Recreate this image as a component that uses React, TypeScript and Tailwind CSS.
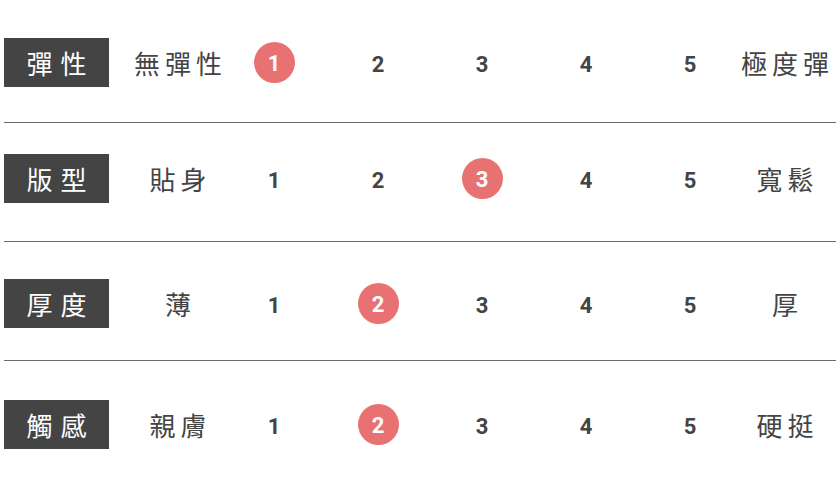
import React from "react";

const rows = [
  { label: "彈性", low: "無彈性", high: "極度彈", value: 1, pad: "pt-[38px] pb-[35px] border-b" },
  { label: "版型", low: "貼身", high: "寬鬆", value: 3, pad: "pt-[31px] pb-[38px] border-b" },
  { label: "厚度", low: "薄", high: "厚", value: 2, pad: "pt-[37px] pb-[32px] border-b" },
  { label: "觸感", low: "親膚", high: "硬挺", value: 2, pad: "pt-[39px] pb-[40px]" },
];

const cjk = "font-['Noto_Sans_CJK_TC','Noto_Sans_CJK_SC',sans-serif]";

const App = () => {
  return (
    <div className="w-[840px] h-[489px] bg-white overflow-hidden">
      <div className="mx-[4px]">
        {rows.map((row) => (
          <div key={row.label} className={`flex items-center border-[#6b6b6b] ${row.pad}`}>
            <div
              className={`w-[105px] h-[49px] bg-[#444444] text-white text-[26px] tracking-[8px] pl-[8px] flex items-center justify-center ${cjk}`}
            >
              {row.label}
            </div>
            <div className="ml-[25px] w-[88px] flex justify-center">
              <span
                className={`text-[#444444] text-[26px] tracking-[5px] pl-[5px] whitespace-nowrap ${cjk}`}
              >
                {row.low}
              </span>
            </div>
            {[1, 2, 3, 4, 5].map((n) => (
              <div key={n} className="w-[104px] flex items-center justify-center">
                {n === row.value ? (
                  <span className="w-[41px] h-[41px] rounded-full bg-[#e87272] text-white text-[22px] font-bold font-['Roboto',sans-serif] flex items-center justify-center pt-[1px]">
                    {n}
                  </span>
                ) : (
                  <span className="text-[#444444] text-[22px] font-bold font-['Roboto',sans-serif] leading-[41px] pt-[3px]">
                    {n}
                  </span>
                )}
              </div>
            ))}
            <div className="w-[86px] flex justify-center">
              <span
                className={`text-[#444444] text-[26px] tracking-[5px] pl-[5px] whitespace-nowrap ${cjk}`}
              >
                {row.high}
              </span>
            </div>
          </div>
        ))}
      </div>
    </div>
  );
};

export default App;
